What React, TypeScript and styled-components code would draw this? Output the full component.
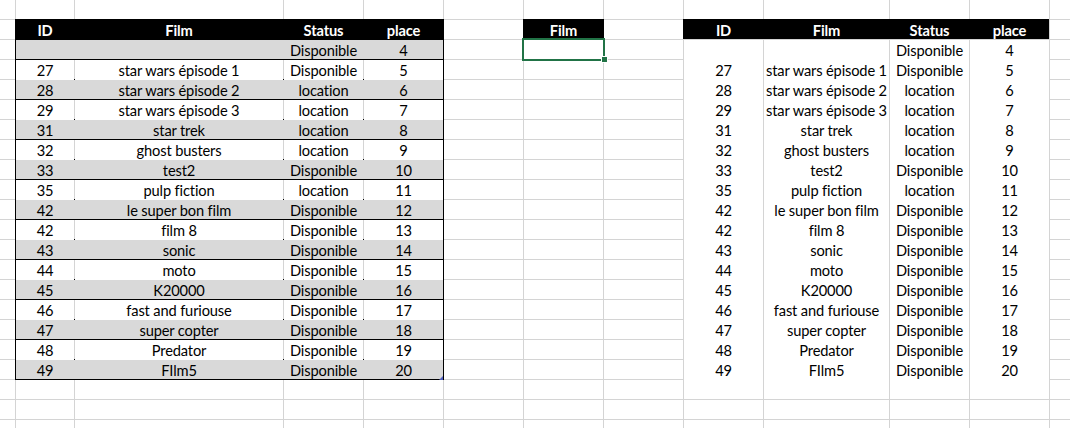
import styled, { createGlobalStyle } from 'styled-components';

type Tone = 'head' | 'shade' | 'plain';

interface Film {
  id: string;
  title: string;
  status: string;
  place: number;
}

const films: Film[] = [
  { id: '', title: '', status: 'Disponible', place: 4 },
  { id: '27', title: 'star wars épisode 1', status: 'Disponible', place: 5 },
  { id: '28', title: 'star wars épisode 2', status: 'location', place: 6 },
  { id: '29', title: 'star wars épisode 3', status: 'location', place: 7 },
  { id: '31', title: 'star trek', status: 'location', place: 8 },
  { id: '32', title: 'ghost busters', status: 'location', place: 9 },
  { id: '33', title: 'test2', status: 'Disponible', place: 10 },
  { id: '35', title: 'pulp fiction', status: 'location', place: 11 },
  { id: '42', title: 'le super bon film', status: 'Disponible', place: 12 },
  { id: '42', title: 'film 8', status: 'Disponible', place: 13 },
  { id: '43', title: 'sonic', status: 'Disponible', place: 14 },
  { id: '44', title: 'moto', status: 'Disponible', place: 15 },
  { id: '45', title: 'K20000', status: 'Disponible', place: 16 },
  { id: '46', title: 'fast and furiouse', status: 'Disponible', place: 17 },
  { id: '47', title: 'super copter', status: 'Disponible', place: 18 },
  { id: '48', title: 'Predator', status: 'Disponible', place: 19 },
  { id: '49', title: 'FIlm5', status: 'Disponible', place: 20 },
];

const headers = ['ID', 'Film', 'Status', 'place'];

// sheet columns A..M, each track sits between 1px grid lines
const SHEET_COLS = '15px 58px 208px 79px 79px 79px 79px 79px 79px 125px 79px 79px 1fr';
const LEFT_COLS = '58px 208px 79px 79px';
const RIGHT_COLS = '79px 125px 79px 79px';
const ROW_COUNT = 22;
const GRID = '#d4d4d4';

// cells taken by the two tables (4 x 18 each) and the two single cells
const emptyCells = 13 * ROW_COUNT - 4 * 18 * 2 - 2;

const App = () => {
  return (
    <>
      <GlobalStyle />
      <Sheet>
        <FilmTable $col="2 / 6" $ruled>
          <Row $cols={LEFT_COLS} $tone="head">
            {headers.map((h) => (
              <HeadCell key={h}>{h}</HeadCell>
            ))}
          </Row>
          {films.map((f, i) => {
            const tone: Tone = i % 2 === 0 ? 'shade' : 'plain';
            const last = i === films.length - 1;
            return (
              <Row key={i} $cols={LEFT_COLS} $tone={tone}>
                <Cell $tone={tone}>{f.id}</Cell>
                <Cell $tone={tone}>{f.title}</Cell>
                <Cell $tone={tone}>{f.status}</Cell>
                <Cell $tone={tone}>
                  {f.place}
                  {last && <ResizeMark />}
                </Cell>
              </Row>
            );
          })}
        </FilmTable>

        <LoneHeader>Film</LoneHeader>
        <ActiveCell>
          <FillHandle />
        </ActiveCell>

        <FilmTable $col="9 / 13">
          <Row $cols={RIGHT_COLS} $tone="head" $bleed>
            {headers.map((h) => (
              <HeadCell key={h}>{h}</HeadCell>
            ))}
          </Row>
          {films.map((f, i) => (
            <Row key={i} $cols={RIGHT_COLS} $tone="plain">
              <Cell $tone="plain">{f.id}</Cell>
              <Cell $tone="plain">{f.title}</Cell>
              <Cell $tone="plain">{f.status}</Cell>
              <Cell $tone="plain">{f.place}</Cell>
            </Row>
          ))}
        </FilmTable>

        {Array.from({ length: emptyCells }, (_, i) => (
          <Blank key={i} />
        ))}
      </Sheet>
    </>
  );
};

export default App;

const GlobalStyle = createGlobalStyle`
  html, body {
    margin: 0;
    padding: 0;
    width: 1070px;
    height: 428px;
    overflow: hidden;
    background: #fff;
  }
  body {
    font-family: Lato, "Open Sans", sans-serif;
    font-size: 14.67px;
    letter-spacing: -0.15px;
    color: #000;
  }
`;

const Sheet = styled.div`
  display: grid;
  grid-template-columns: ${SHEET_COLS};
  grid-template-rows: repeat(${ROW_COUNT}, 19px);
  gap: 1px;
  width: 1070px;
  height: 428px;
  overflow: hidden;
  background: ${GRID};
`;

const Blank = styled.div`
  background: #fff;
`;

const FilmTable = styled.div<{ $col: string; $ruled?: boolean }>`
  grid-column: ${(p) => p.$col};
  grid-row: 2 / 20;
  display: grid;
  grid-template-columns: 100%;
  grid-auto-rows: 19px;
  row-gap: 1px;
  background: ${(p) => (p.$ruled ? '#000' : GRID)};
  outline: ${(p) => (p.$ruled ? '1px solid #000' : 'none')};
`;

const rowBg: Record<Tone, string> = {
  head: '#000',
  shade: '#d9d9d9',
  plain: GRID,
};

const Row = styled.div<{ $cols: string; $tone: Tone; $bleed?: boolean }>`
  display: grid;
  grid-template-columns: ${(p) => p.$cols};
  column-gap: 1px;
  background: ${(p) => rowBg[p.$tone]};
  box-shadow: ${(p) =>
    p.$bleed ? '-1px -1px 0 #000, 0 -1px 0 #000, -1px 0 0 #000' : 'none'};
`;

const Cell = styled.div<{ $tone: Tone }>`
  position: relative;
  background: ${(p) => (p.$tone === 'plain' ? '#fff' : 'transparent')};
  text-align: center;
  line-height: 19px;
  padding-top: 1px;
  white-space: nowrap;
`;

const HeadCell = styled.div`
  color: #fff;
  font-weight: 700;
  text-align: center;
  line-height: 19px;
  padding-top: 1px;
  white-space: nowrap;
`;

const LoneHeader = styled(HeadCell)`
  grid-column: 7;
  grid-row: 2;
  background: #000;
  box-shadow: 0 -1px 0 #000, -1px 0 0 #000, 1px 0 0 #000, -1px -1px 0 #000,
    1px -1px 0 #000;
`;

const ActiveCell = styled.div`
  grid-column: 7;
  grid-row: 3;
  position: relative;
  z-index: 1;
  background: #fff;
  outline: 2px solid #217346;
`;

const FillHandle = styled.span`
  position: absolute;
  right: -5px;
  bottom: -4px;
  width: 5px;
  height: 5px;
  background: #217346;
  border: 1px solid #fff;
`;

const ResizeMark = styled.span`
  position: absolute;
  right: 0;
  bottom: 0;
  width: 4px;
  height: 4px;
  background: #4f5fbf;
  clip-path: polygon(100% 0, 100% 100%, 0 100%);
`;
